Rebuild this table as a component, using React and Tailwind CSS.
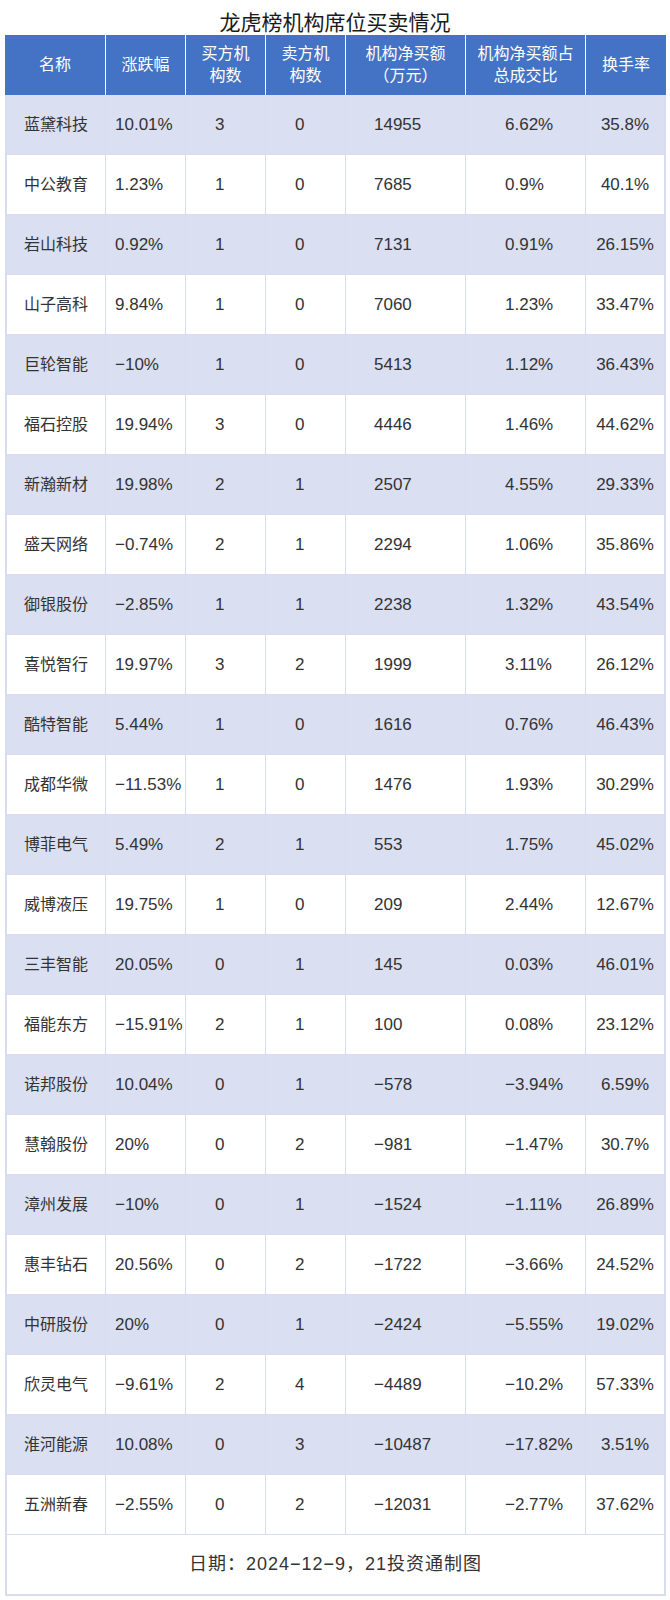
import React from "react";

const rows = [
  ["蓝黛科技", "10.01%", "3", "0", "14955", "6.62%", "35.8%"],
  ["中公教育", "1.23%", "1", "0", "7685", "0.9%", "40.1%"],
  ["岩山科技", "0.92%", "1", "0", "7131", "0.91%", "26.15%"],
  ["山子高科", "9.84%", "1", "0", "7060", "1.23%", "33.47%"],
  ["巨轮智能", "−10%", "1", "0", "5413", "1.12%", "36.43%"],
  ["福石控股", "19.94%", "3", "0", "4446", "1.46%", "44.62%"],
  ["新瀚新材", "19.98%", "2", "1", "2507", "4.55%", "29.33%"],
  ["盛天网络", "−0.74%", "2", "1", "2294", "1.06%", "35.86%"],
  ["御银股份", "−2.85%", "1", "1", "2238", "1.32%", "43.54%"],
  ["喜悦智行", "19.97%", "3", "2", "1999", "3.11%", "26.12%"],
  ["酷特智能", "5.44%", "1", "0", "1616", "0.76%", "46.43%"],
  ["成都华微", "−11.53%", "1", "0", "1476", "1.93%", "30.29%"],
  ["博菲电气", "5.49%", "2", "1", "553", "1.75%", "45.02%"],
  ["威博液压", "19.75%", "1", "0", "209", "2.44%", "12.67%"],
  ["三丰智能", "20.05%", "0", "1", "145", "0.03%", "46.01%"],
  ["福能东方", "−15.91%", "2", "1", "100", "0.08%", "23.12%"],
  ["诺邦股份", "10.04%", "0", "1", "−578", "−3.94%", "6.59%"],
  ["慧翰股份", "20%", "0", "2", "−981", "−1.47%", "30.7%"],
  ["漳州发展", "−10%", "0", "1", "−1524", "−1.11%", "26.89%"],
  ["惠丰钻石", "20.56%", "0", "2", "−1722", "−3.66%", "24.52%"],
  ["中研股份", "20%", "0", "1", "−2424", "−5.55%", "19.02%"],
  ["欣灵电气", "−9.61%", "2", "4", "−4489", "−10.2%", "57.33%"],
  ["淮河能源", "10.08%", "0", "3", "−10487", "−17.82%", "3.51%"],
  ["五洲新春", "−2.55%", "0", "2", "−12031", "−2.77%", "37.62%"],
];

const FONT = { fontFamily: '"Liberation Sans", "Noto Sans CJK SC", sans-serif' };

function HeaderCell({ className, children }) {
  return (
    <div
      className={
        "flex items-center justify-center text-center text-white text-[16px] leading-[22px] " +
        className
      }
    >
      {children}
    </div>
  );
}

export default function App() {
  return (
    <div className="w-[670px] bg-white pb-[4px]" style={FONT}>
      <div className="h-[35px] flex items-end justify-center">
        <span className="text-[21px] leading-[24px] text-[#1a1a1a]">
          龙虎榜机构席位买卖情况
        </span>
      </div>
      <div className="ml-[5px] w-[661px]">
        <div className="flex h-[60px] bg-[#4472c4]">
          <HeaderCell className="w-[101px] border-r border-white">名称</HeaderCell>
          <HeaderCell className="w-[80px] border-r border-white">涨跌幅</HeaderCell>
          <HeaderCell className="w-[80px] border-r border-white">
            买方机<br />构数
          </HeaderCell>
          <HeaderCell className="w-[80px] border-r border-white">
            卖方机<br />构数
          </HeaderCell>
          <HeaderCell className="w-[120px] border-r border-white">
            机构净买额<br />（万元）
          </HeaderCell>
          <HeaderCell className="w-[120px] border-r border-white">
            机构净买额占<br />总成交比
          </HeaderCell>
          <HeaderCell className="w-[80px]">换手率</HeaderCell>
        </div>
        <div className="border-x-2 border-b-2 border-[#d8dcef]">
          {rows.map((r, i) => (
            <div
              key={i}
              className={
                "flex h-[60px] border-b border-[#d8dcef] text-[#333333] whitespace-nowrap " +
                (i % 2 === 0 ? "bg-[#dadff2]" : "bg-white")
              }
            >
              <div className="w-[99px] border-r border-[#d8dcef] flex items-center justify-center text-[16px]">
                {r[0]}
              </div>
              <div className="w-[80px] border-r border-[#d8dcef] flex items-center pl-[9px] text-[17px]">
                {r[1]}
              </div>
              <div className="w-[80px] border-r border-[#d8dcef] flex items-center pl-[29px] text-[17px]">
                {r[2]}
              </div>
              <div className="w-[80px] border-r border-[#d8dcef] flex items-center pl-[29px] text-[17px]">
                {r[3]}
              </div>
              <div className="w-[120px] border-r border-[#d8dcef] flex items-center pl-[28px] text-[17px]">
                {r[4]}
              </div>
              <div className="w-[120px] border-r border-[#d8dcef] flex items-center pl-[39px] text-[17px]">
                {r[5]}
              </div>
              <div className="w-[78px] flex items-center justify-center text-[17px]">
                {r[6]}
              </div>
            </div>
          ))}
          <div className="h-[59px] flex items-center justify-center text-[18px] tracking-[1px] text-[#333333]">
            日期：2024−12−9，21投资通制图
          </div>
        </div>
      </div>
    </div>
  );
}
